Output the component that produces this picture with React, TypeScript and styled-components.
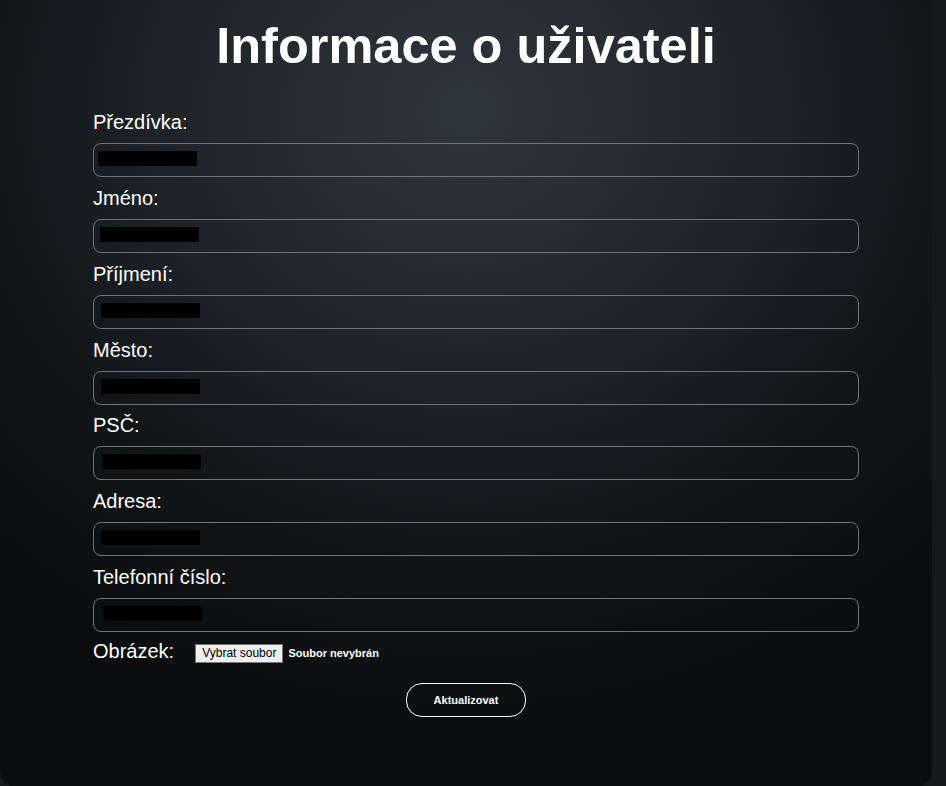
import React from "react";
import styled, { createGlobalStyle } from "styled-components";

const Global = createGlobalStyle`
  html, body { margin: 0; padding: 0; }
  body {
    background: #16191c;
    font-family: "Liberation Sans", Arial, sans-serif;
    color: #ffffff;
    overflow: hidden;
  }
`;

const Panel = styled.main`
  width: 932px;
  min-height: 787px;
  box-sizing: border-box;
  border-radius: 0 0 16px 16px;
  background: radial-gradient(ellipse 75% 80% at 50% 14%, #2e363d 0%, #20262b 38%, #121518 70%, #0a0c0e 100%);
  padding-top: 18px;
`;

const Title = styled.h1`
  margin: 0;
  font-size: 50.5px;
  line-height: 55px;
  font-weight: 700;
  text-align: center;
  color: #ffffff;
`;

const Form = styled.form`
  width: 746px;
  margin: 38px auto 0;
  display: flex;
  flex-direction: column;
`;

const Label = styled.label`
  display: block;
  font-size: 20px;
  line-height: 23px;
  color: #ffffff;
  margin-bottom: 9px;
`;

const Field = styled.div`
  width: 764px;
  height: 32px;
  padding: 0;
  border: 1px solid #707478;
  border-radius: 8px;
  margin-bottom: 9.85px;
  display: flex;
  align-items: flex-start;
  background: transparent;
`;

const Redacted = styled.span<{ $shift: number }>`
  display: block;
  width: 99px;
  height: 15px;
  background: #000000;
  margin-top: 7px;
  margin-left: ${(p) => p.$shift}px;
`;

const FileRow = styled.div`
  display: flex;
  align-items: flex-start;
  height: 23px;
  margin-top: -2px;
`;

const FileLabel = styled.label`
  font-size: 20px;
  line-height: 23px;
  color: #ffffff;
  margin-right: 21px;
`;

const FileButton = styled.button`
  font-family: "Liberation Sans", Arial, sans-serif;
  font-size: 12px;
  height: 19px;
  padding: 0 6px;
  background: #efefef;
  color: #000000;
  border: 1px solid #767676;
  border-radius: 0;
  margin-top: 4px;
`;

const FileStatus = styled.span`
  font-size: 11px;
  line-height: 19px;
  font-weight: 700;
  margin-left: 5px;
  margin-top: 4px;
  color: #ffffff;
`;

const Submit = styled.button`
  align-self: center;
  margin-top: 20px;
  width: 120px;
  height: 34px;
  border: 1px solid #ffffff;
  border-radius: 16px;
  background: transparent;
  color: #ffffff;
  font-family: "Liberation Sans", Arial, sans-serif;
  font-size: 11px;
  font-weight: 700;
`;

const fields = [
  { label: "Přezdívka:", shift: 4 },
  { label: "Jméno:", shift: 6 },
  { label: "Příjmení:", shift: 7 },
  { label: "Město:", shift: 7 },
  { label: "PSČ:", shift: 8 },
  { label: "Adresa:", shift: 7 },
  { label: "Telefonní číslo:", shift: 9 },
];

export default function App() {
  return (
    <>
      <Global />
      <Panel>
        <Title>Informace o uživateli</Title>
        <Form onSubmit={(e) => e.preventDefault()}>
          {fields.map((f) => (
            <React.Fragment key={f.label}>
              <Label>{f.label}</Label>
              <Field>
                <Redacted $shift={f.shift} />
              </Field>
            </React.Fragment>
          ))}
          <FileRow>
            <FileLabel>Obrázek:</FileLabel>
            <FileButton type="button">Vybrat soubor</FileButton>
            <FileStatus>Soubor nevybrán</FileStatus>
          </FileRow>
          <Submit type="submit">Aktualizovat</Submit>
        </Form>
      </Panel>
    </>
  );
}
